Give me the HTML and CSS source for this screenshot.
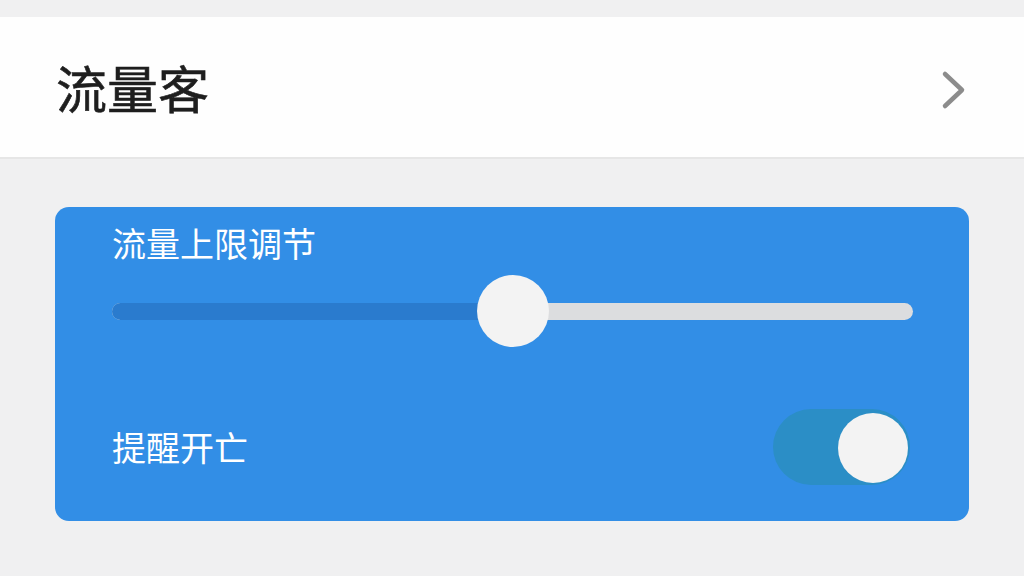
FILE: index.html
```html
<!DOCTYPE html>
<html>
<head>
  <meta charset="utf-8">
  <title>流量客</title>
  <link rel="stylesheet" href="styles.css">
</head>
<body>
  <div class="header">
    <h1>流量客</h1>
    <svg class="chevron" width="26" height="40" viewBox="0 0 26 40">
      <path d="M4 4 L21 20 L4 36" fill="none" stroke="#8c8c8c" stroke-width="4.5" stroke-linecap="round" stroke-linejoin="round"/>
    </svg>
  </div>

  <div class="card">
    <div class="card-title">流量上限调节</div>
    <div class="slider">
      <div class="track">
        <div class="fill" style="width: 50%;"></div>
      </div>
      <div class="thumb" style="left: 50%;"></div>
    </div>
    <div class="row">
      <span class="label">提醒开亡</span>
      <div class="toggle on">
        <div class="knob"></div>
      </div>
    </div>
  </div>
</body>
</html>
```

FILE: styles.css
```css
body {
  margin: 0;
  padding: 0;
  background: #f0f0f1;
  font-family: "Noto Sans CJK SC", "Noto Sans", sans-serif;
}

.header {
  margin-top: 17px;
  height: 140px;
  background: #fefefe;
  border-bottom: 2px solid #e6e6e6;
  display: flex;
  align-items: center;
  justify-content: space-between;
  padding: 0 57px 0 56px;
}

.header h1 {
  margin: 0;
  font-size: 51px;
  font-weight: 400;
  color: #1e1e1e;
  line-height: 1;
  -webkit-text-stroke: 0.6px #1e1e1e;
}

.chevron {
  display: block;
  margin-top: 6px;
}

.card {
  margin: 48px 55px 0 55px;
  background: #328ee6;
  border-radius: 14px;
  padding: 16px 56px 36px 57px;
}

.card-title {
  color: #fff;
  font-size: 34px;
  line-height: 40px;
}

.slider {
  position: relative;
  height: 72px;
  margin-top: 12px;
  display: flex;
  align-items: center;
}

.track {
  width: 100%;
  height: 17px;
  border-radius: 9px;
  background: #dcdddf;
  overflow: hidden;
}

.fill {
  height: 100%;
  background: #2a7bce;
}

.thumb {
  position: absolute;
  top: 0;
  width: 72px;
  height: 72px;
  margin-left: -36px;
  border-radius: 50%;
  background: #f3f3f3;
}

.row {
  display: flex;
  align-items: center;
  justify-content: space-between;
  margin-top: 62px;
}

.label {
  color: #fff;
  font-size: 34px;
  line-height: 40px;
}

.toggle {
  position: relative;
  width: 137px;
  height: 76px;
  border-radius: 38px;
  background: #2b8ec6;
  margin-right: 3px;
}

.toggle .knob {
  position: absolute;
  top: 4px;
  right: 2px;
  width: 70px;
  height: 70px;
  border-radius: 50%;
  background: #f3f3f3;
}
```
